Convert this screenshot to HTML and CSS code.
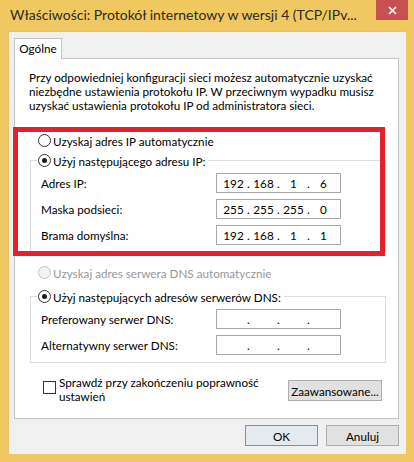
FILE: index.html
```html
<!DOCTYPE html>
<html lang="pl">
<head>
    <meta charset="UTF-8">
    <meta name="viewport" content="width=device-width, initial-scale=1.0">
    <title>Właściwości: Protokół internetowy w wersji 4</title>
    <link rel="stylesheet" href="styles.css">
</head>
<body>

    <div class="window">
        <div class="titlebar">
            <span class="title">Właściwości: Protokół internetowy w wersji 4 (TCP/IPv...</span>
            <span class="close">
                <svg width="9" height="9" viewBox="0 0 9 9"><path d="M1 1L8 8M8 1L1 8" stroke="#fff" stroke-width="1.6"/></svg>
            </span>
        </div>

        <div class="client">
            <div class="tabs">
                <div class="tab">Ogólne</div>
            </div>

            <div class="panel">
                <p class="intro">
                    Przy odpowiedniej konfiguracji sieci możesz automatycznie uzyskać<br>
                    niezbędne ustawienia protokołu IP. W przeciwnym wypadku musisz<br>
                    uzyskać ustawienia protokołu IP od administratora sieci.
                </p>

                <div class="option"><span class="radio"></span>Uzyskaj adres IP automatycznie</div>

                <fieldset class="group">
                    <legend><span class="radio checked"></span>Użyj następującego adresu IP:</legend>
                    <div class="field">
                        <span>Adres IP:</span>
                        <div class="ip"><span>192</span><i>.</i><span>168</span><i>.</i><span>1</span><i>.</i><span>6</span></div>
                    </div>
                    <div class="field">
                        <span>Maska podsieci:</span>
                        <div class="ip"><span>255</span><i>.</i><span>255</span><i>.</i><span>255</span><i>.</i><span>0</span></div>
                    </div>
                    <div class="field">
                        <span>Brama domyślna:</span>
                        <div class="ip"><span>192</span><i>.</i><span>168</span><i>.</i><span>1</span><i>.</i><span>1</span></div>
                    </div>
                </fieldset>

                <div class="option dns-auto disabled"><span class="radio"></span>Uzyskaj adres serwera DNS automatycznie</div>

                <fieldset class="group dns">
                    <legend><span class="radio checked"></span>Użyj następujących adresów serwerów DNS:</legend>
                    <div class="field">
                        <span>Preferowany serwer DNS:</span>
                        <div class="ip"><span></span><i>.</i><span></span><i>.</i><span></span><i>.</i><span></span></div>
                    </div>
                    <div class="field">
                        <span>Alternatywny serwer DNS:</span>
                        <div class="ip"><span></span><i>.</i><span></span><i>.</i><span></span><i>.</i><span></span></div>
                    </div>
                </fieldset>

                <div class="bottom-row">
                    <div class="check-row">
                        <span class="checkbox"></span>
                        <span>Sprawdź przy zakończeniu poprawność<br>ustawień</span>
                    </div>
                    <button class="btn advanced">Zaawansowane...</button>
                </div>

                <!-- red annotation frame over the IP settings -->
                <div class="highlight"></div>
            </div>

            <div class="actions">
                <button class="btn default">OK</button>
                <button class="btn">Anuluj</button>
            </div>
        </div>
    </div>

</body>
</html>
```

FILE: styles.css
```css
body {
    margin: 0;
    font-family: Lato, "Noto Sans", Arial, sans-serif;
    font-size: 11.7px;
    color: #000;
}
.window {
    width: 414px;
    height: 462px;
    background-color: #efc862;
    display: flex;
    flex-direction: column;
}
.titlebar {
    height: 31px;
    display: flex;
    align-items: flex-start;
}
.title {
    padding: 6px 0 0 10px;
    font-size: 14px;
    color: #2e2a1e;
    white-space: nowrap;
}
.close {
    margin-left: auto;
    margin-right: 6px;
    width: 32px;
    height: 20px;
    background-color: #c75050;
    display: flex;
    align-items: center;
    justify-content: center;
}
.client {
    flex: 1;
    margin: 0 8px 8px;
    background-color: #f0f0f0;
    border: 1px solid #e3c17a;
    border-width: 1px 0 0 1px;
    display: flex;
    flex-direction: column;
}
.tabs {
    display: flex;
    padding: 6px 0 0 5px;
}
.tab {
    position: relative;
    z-index: 1;
    width: 46px;
    height: 20px;
    line-height: 19px;
    text-align: center;
    background-color: #fff;
    border: 1px solid #c4c4c4;
    border-bottom: none;
    margin-bottom: -1px;
}
.panel {
    position: relative;
    height: 359px;
    margin: 0 7px 0 5px;
    background-color: #fff;
    border: 1px solid #c4c4c4;
}
.intro {
    margin: 11px 0 0 14px;
    line-height: 14px;
    white-space: nowrap;
}
.option {
    display: flex;
    align-items: center;
    height: 15px;
    margin: 21px 0 0 23px;
}
.option.dns-auto {
    margin-top: 13px;
}
.option.disabled {
    color: #979797;
}
.radio {
    width: 11px;
    height: 11px;
    border: 1px solid #333;
    border-radius: 50%;
    background-color: #fff;
    margin-right: 2px;
    display: inline-flex;
    align-items: center;
    justify-content: center;
    flex-shrink: 0;
}
.radio.checked::after {
    content: "";
    width: 5px;
    height: 5px;
    border-radius: 50%;
    background-color: #1b1b1b;
}
.disabled .radio {
    border-color: #c2c2c2;
    background-color: #f2f2f2;
}
.group {
    margin: 5px 12px 0 15px;
    padding: 5px 10px 6px;
    border: 1px solid #dcdcdc;
    min-width: 0;
}
.group.dns {
    margin-top: 9px;
    padding-bottom: 7px;
}
.group legend {
    display: flex;
    align-items: center;
    height: 15px;
    padding: 0 3px 0 1px;
    margin-left: -4px;
}
.field {
    display: flex;
    align-items: center;
    margin-top: 6px;
}
.field:first-of-type {
    margin-top: 0;
}
.field > span {
    width: 175px;
}
.ip {
    width: 120px;
    height: 18px;
    border: 1px solid #a8a8a8;
    display: flex;
    align-items: center;
    padding-left: 3px;
}
.ip span {
    width: 27px;
    text-align: center;
}
.ip i {
    font-style: normal;
    width: 3px;
    text-align: center;
}
.bottom-row {
    display: flex;
    justify-content: space-between;
    align-items: flex-start;
    margin: 12px 16px 0 28px;
}
.check-row {
    display: flex;
    align-items: flex-start;
    line-height: 14px;
}
.checkbox {
    width: 11px;
    height: 11px;
    border: 1px solid #333;
    margin: 6px 3px 0 0;
    flex-shrink: 0;
}
.btn {
    font-family: inherit;
    font-size: 11.7px;
    height: 21px;
    width: 73px;
    padding: 0;
    background-color: #e1e1e1;
    border: 1px solid #adadad;
    color: #000;
}
.btn.advanced {
    width: 94px;
    margin-top: 5px;
}
.btn.default {
    border-color: #5a9bd5;
    background-color: #e5eaf0;
}
.actions {
    display: flex;
    justify-content: flex-end;
    gap: 8px;
    margin: 6px 7px 0 0;
}
.highlight {
    position: absolute;
    left: -2px;
    top: 68px;
    width: 362px;
    height: 119px;
    border: 5px solid #e4202a;
    pointer-events: none;
}
```
